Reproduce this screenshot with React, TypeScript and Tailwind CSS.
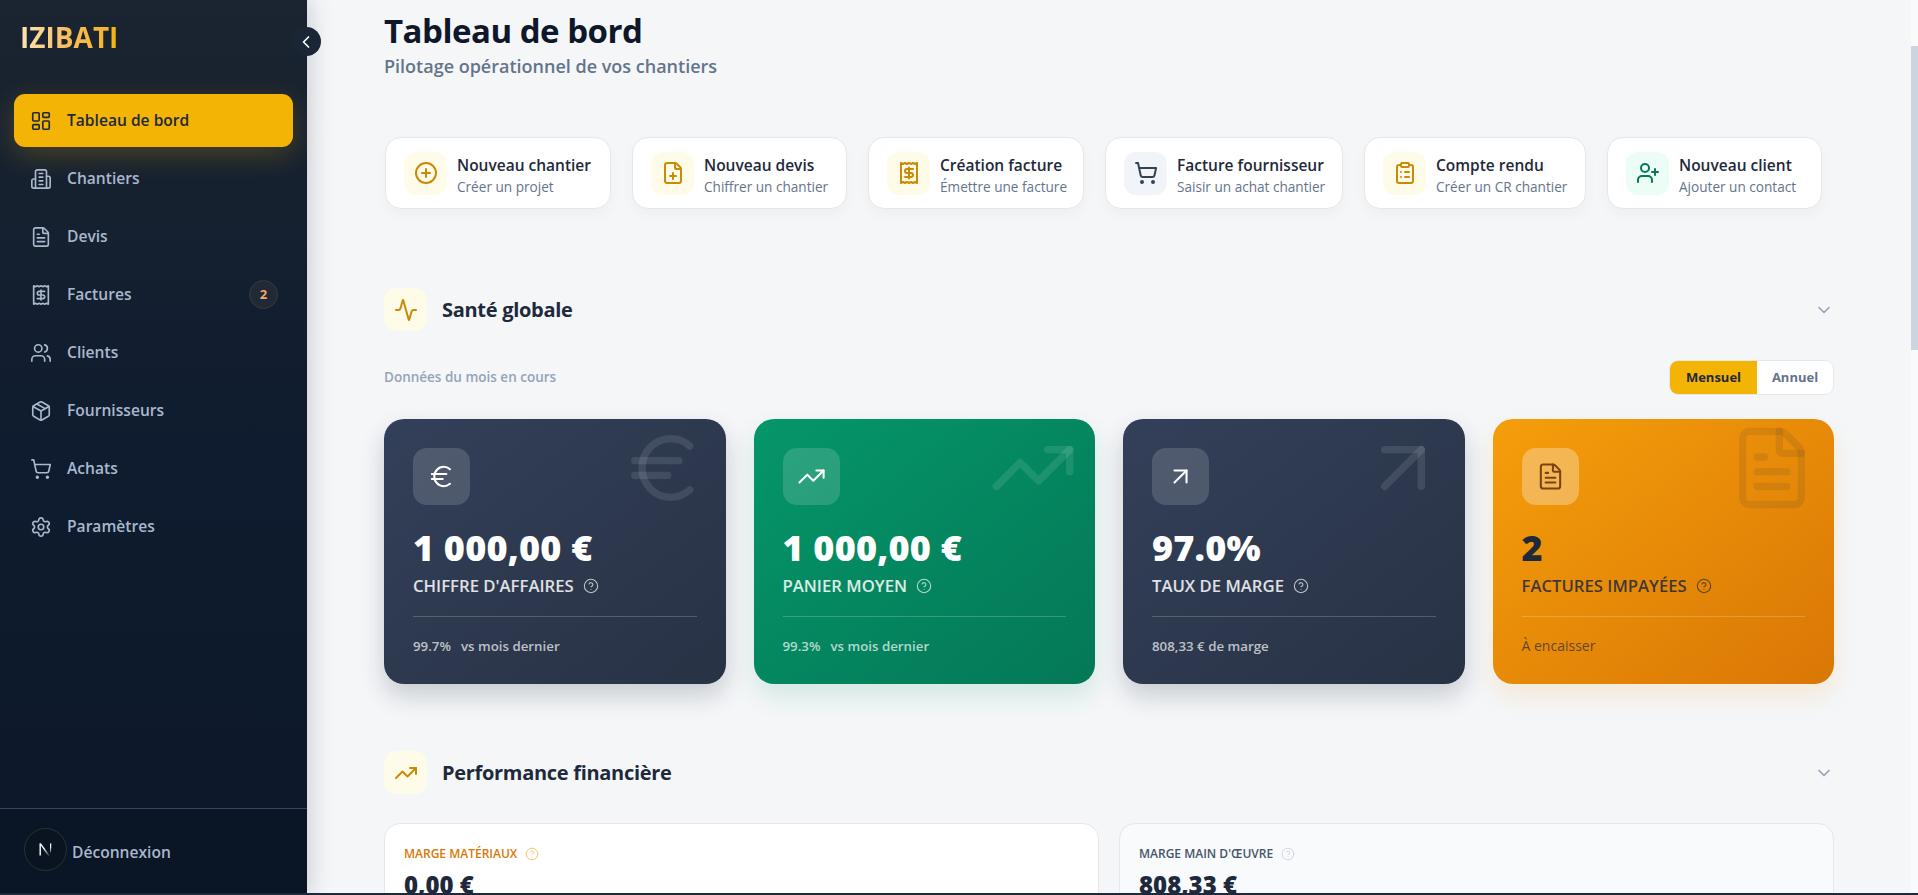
import React from "react";
import {
  Activity,
  ArrowUpRight,
  ChevronDown,
  ChevronLeft,
  CircleHelp,
  CirclePlus,
  ClipboardList,
  Euro,
  FilePlus,
  FileText,
  LayoutDashboard,
  LucideIcon,
  Package,
  Settings,
  ShoppingCart,
  TrendingUp,
  UserPlus,
  Users,
} from "lucide-react";

// Old lucide shapes, the installed version draws these two differently
const BuildingIcon: React.FC<{ className?: string; strokeWidth?: number }> = ({ className, strokeWidth = 2 }) => (
  <svg viewBox="0 0 24 24" fill="none" stroke="currentColor" strokeWidth={strokeWidth} strokeLinecap="round" strokeLinejoin="round" className={className}>
    <path d="M6 22V4a2 2 0 0 1 2-2h8a2 2 0 0 1 2 2v18Z" />
    <path d="M6 12H4a2 2 0 0 0-2 2v6a2 2 0 0 0 2 2h2" />
    <path d="M18 9h2a2 2 0 0 1 2 2v9a2 2 0 0 1-2 2h-2" />
    <path d="M10 6h4" />
    <path d="M10 10h4" />
    <path d="M10 14h4" />
    <path d="M10 18h4" />
  </svg>
);

const ReceiptIcon: React.FC<{ className?: string; strokeWidth?: number }> = ({ className, strokeWidth = 2 }) => (
  <svg viewBox="0 0 24 24" fill="none" stroke="currentColor" strokeWidth={strokeWidth} strokeLinecap="round" strokeLinejoin="round" className={className}>
    <path d="M4 2v20l2-1 2 1 2-1 2 1 2-1 2 1 2-1 2 1V2l-2 1-2-1-2 1-2-1-2 1-2-1-2 1Z" />
    <path d="M16 8h-6a2 2 0 1 0 0 4h4a2 2 0 1 1 0 4H8" />
    <path d="M12 17.5v-11" />
  </svg>
);

const navItems: { label: string; icon: React.ElementType; active?: boolean; badge?: string }[] = [
  { label: "Tableau de bord", icon: LayoutDashboard, active: true },
  { label: "Chantiers", icon: BuildingIcon },
  { label: "Devis", icon: FileText },
  { label: "Factures", icon: ReceiptIcon, badge: "2" },
  { label: "Clients", icon: Users },
  { label: "Fournisseurs", icon: Package },
  { label: "Achats", icon: ShoppingCart },
  { label: "Paramètres", icon: Settings },
];

const quickActions: { title: string; sub: string; icon: React.ElementType; width: string; box: string; tint: string }[] = [
  { title: "Nouveau chantier", sub: "Créer un projet", icon: CirclePlus, width: "w-[226px]", box: "bg-[#fefce8]", tint: "text-[#ca8a04]" },
  { title: "Nouveau devis", sub: "Chiffrer un chantier", icon: FilePlus, width: "w-[215px]", box: "bg-[#fefce8]", tint: "text-[#ca8a04]" },
  { title: "Création facture", sub: "Émettre une facture", icon: ReceiptIcon, width: "w-[216px]", box: "bg-[#fefce8]", tint: "text-[#ca8a04]" },
  { title: "Facture fournisseur", sub: "Saisir un achat chantier", icon: ShoppingCart, width: "w-[238px]", box: "bg-[#f1f5f9]", tint: "text-[#334155]" },
  { title: "Compte rendu", sub: "Créer un CR chantier", icon: ClipboardList, width: "w-[222px]", box: "bg-[#fefce8]", tint: "text-[#ca8a04]" },
  { title: "Nouveau client", sub: "Ajouter un contact", icon: UserPlus, width: "w-[215px]", box: "bg-[#ecfdf5]", tint: "text-[#047857]" },
];

interface KpiCardProps {
  value: string;
  label: string;
  icon: LucideIcon;
  footer: React.ReactNode;
  card: string;
  main: string;
  soft: string;
  faint: string;
  box: string;
  boxIcon: string;
  rule: string;
  mark: string;
}

const KpiCard: React.FC<KpiCardProps> = ({ value, label, icon: Icon, footer, card, main, soft, faint, box, boxIcon, rule, mark }) => (
  <div className={`relative h-[265px] rounded-[20px] p-[29px] ${card}`}>
    <Icon className={`absolute top-[5px] right-[18px] w-[88px] h-[88px] ${mark}`} strokeWidth={2} />
    <div className={`w-[57px] h-[57px] rounded-[14px] flex items-center justify-center ${box}`}>
      <Icon className={`w-[29px] h-[29px] ${boxIcon}`} strokeWidth={1.7} />
    </div>
    <div className={`mt-[21px] h-[44px] leading-[44px] text-[36px] font-black font-['Noto_Sans',sans-serif] tracking-[0.2px] ${main}`}>{value}</div>
    <div className={`mt-[4px] flex items-center gap-[9px] text-[16.7px] leading-[24px] font-semibold ${soft}`}>
      {label}
      <CircleHelp className={`w-[16px] h-[16px] ${faint}`} strokeWidth={1.6} />
    </div>
    <div className={`mt-[18px] h-px ${rule}`} />
    <div className={`mt-[20px] text-[13.3px] leading-[18px] font-semibold ${faint}`}>{footer}</div>
  </div>
);

const SectionHeader: React.FC<{ title: string; icon: LucideIcon }> = ({ title, icon: Icon }) => (
  <div className="flex items-center justify-between">
    <div className="flex items-center gap-[15px]">
      <div className="w-[43px] h-[43px] rounded-xl bg-[#fefce8] flex items-center justify-center">
        <Icon className="w-6 h-6 text-[#ca8a04]" strokeWidth={2} />
      </div>
      <h2 className="text-[20px] leading-7 font-bold text-[#1e293b] tracking-[-0.3px]">{title}</h2>
    </div>
    <ChevronDown className="w-[20px] h-[20px] text-[#94a3b8]" />
  </div>
);

const App: React.FC = () => {
  return (
    <div className="relative flex h-[895px] w-full overflow-hidden bg-[#f4f6f8] font-['Open_Sans',sans-serif]">
      {/* Sidebar */}
      <aside className="relative z-10 w-[307px] shrink-0 flex flex-col bg-gradient-to-b from-[#1b2430] via-[#0f1c2f] to-[#0c1829] shadow-[0_0_24px_rgba(15,23,42,0.22)]">
        <div className="h-[94px] pl-[20px] pt-[17px]">
          <span className="text-[28px] leading-[40px] font-bold bg-gradient-to-r from-[#fde3b4] via-[#f8bc55] to-[#f4b405] bg-clip-text text-transparent">
            IZIBATI
          </span>
        </div>
        <button className="absolute top-[27px] -right-[14px] w-[29px] h-[29px] rounded-full bg-[#1a2636] flex items-center justify-center text-white">
          <ChevronLeft className="w-5 h-5 -ml-[2px]" />
        </button>

        <nav className="flex flex-col gap-[5.1px] px-[14px]">
          {navItems.map((item) => {
            const Icon = item.icon;
            return (
              <div
                key={item.label}
                className={`h-[53px] rounded-[11px] pl-[16px] pr-[15px] flex items-center gap-[15px] text-[15.6px] font-semibold ${
                  item.active
                    ? "bg-[#f4b405] text-[#1e293b] shadow-[0_8px_28px_rgba(244,180,5,0.22)]"
                    : "text-[#a9b8cd]"
                }`}
              >
                <Icon className="w-[22px] h-[22px]" strokeWidth={1.8} />
                <span className="flex-1">{item.label}</span>
                {item.badge && (
                  <span className="w-[29px] h-[29px] rounded-full bg-[#1f2a36] border border-[#3b3a34] flex items-center justify-center text-[13px] font-bold text-[#f3a863]">
                    {item.badge}
                  </span>
                )}
              </div>
            );
          })}
        </nav>

        <div className="mt-auto h-[87px] border-t border-[#34445a] bg-[#0a1526] pl-[24px] pt-[19px] flex items-start gap-[5px]">
          <div className="w-[43px] h-[43px] rounded-full bg-[#0a1320] border border-[#2c3235] flex items-center justify-center">
            <svg viewBox="0 0 18 18" className="w-[18px] h-[18px]" fill="none">
              <defs>
                <linearGradient id="nextFade" x1="0.6" y1="0.3" x2="0.9" y2="1">
                  <stop offset="0" stopColor="#fff" />
                  <stop offset="1" stopColor="#fff" stopOpacity="0" />
                </linearGradient>
              </defs>
              <path d="M2.5 2.5h1.6l9.4 13h-2z" fill="url(#nextFade)" />
              <path d="M2.5 2.5h1.4v12H2.5z" fill="#fff" />
              <path d="M13 2.5h1.3v9H13z" fill="url(#nextFade)" />
            </svg>
          </div>
          <span className="mt-[12px] text-[15.6px] leading-[24px] font-semibold text-[#a9b8cd]">Déconnexion</span>
        </div>
      </aside>

      {/* Main */}
      <main className="flex-1 min-w-0 overflow-hidden pt-[9px]">
        <div className="w-[1450px] mx-auto">
          <header>
            <h1 className="text-[33px] leading-[44px] font-bold text-[#0f172a] tracking-[-0.5px]">Tableau de bord</h1>
            <p className="text-[18px] leading-[27px] font-semibold text-[#64748b]">Pilotage opérationnel de vos chantiers</p>
          </header>

          <div className="mt-[57px] flex gap-[21px] pl-px">
            {quickActions.map((action) => {
              const Icon = action.icon;
              return (
                <div
                  key={action.title}
                  className={`${action.width} shrink-0 h-[72px] rounded-2xl bg-white border border-[#e5e7eb] shadow-[0_6px_14px_rgba(15,23,42,0.03)] pl-[18px] flex items-center gap-[10px]`}
                >
                  <div className={`w-[43px] h-[43px] shrink-0 rounded-xl flex items-center justify-center ${action.box}`}>
                    <Icon className={`w-6 h-6 ${action.tint}`} strokeWidth={2} />
                  </div>
                  <div className="whitespace-nowrap mt-[3px]">
                    <div className="text-[15.5px] leading-[23px] font-semibold text-[#1e293b]">{action.title}</div>
                    <div className="text-[13.6px] leading-[19px] text-[#64748b]">{action.sub}</div>
                  </div>
                </div>
              );
            })}
          </div>

          <section className="mt-[79px]">
            <SectionHeader title="Santé globale" icon={Activity} />
            <div className="mt-[30px] flex items-center justify-between">
              <span className="text-[13.5px] font-semibold text-[#94a3b8]">Données du mois en cours</span>
              <div className="flex h-[33px] mr-px rounded-lg bg-white shadow-[0_0_0_1px_#e5e7eb] overflow-hidden text-[13px] font-bold">
                <span className="w-[87px] bg-[#f4b405] text-[#1e293b] flex items-center justify-center">Mensuel</span>
                <span className="w-[76px] text-[#64748b] flex items-center justify-center">Annuel</span>
              </div>
            </div>
            <div className="mt-[25px] grid grid-cols-4 gap-7">
              <KpiCard
                value="1 000,00 €"
                label="CHIFFRE D'AFFAIRES"
                icon={Euro}
                card="bg-gradient-to-br from-[#334059] to-[#283245] shadow-[0_12px_24px_rgba(30,41,59,0.2)]"
                main="text-white"
                soft="text-white/85"
                faint="text-white/70"
                box="bg-white/15"
                boxIcon="text-white"
                rule="bg-white/20"
                mark="text-white/10"
                footer={<span className="flex gap-[10px]"><span>99.7%</span><span>vs mois dernier</span></span>}
              />
              <KpiCard
                value="1 000,00 €"
                label="PANIER MOYEN"
                icon={TrendingUp}
                card="bg-gradient-to-br from-[#059669] to-[#047857] shadow-[0_12px_24px_rgba(5,150,105,0.14)]"
                main="text-white"
                soft="text-white/85"
                faint="text-white/70"
                box="bg-white/15"
                boxIcon="text-white"
                rule="bg-white/20"
                mark="text-white/10"
                footer={<span className="flex gap-[10px]"><span>99.3%</span><span>vs mois dernier</span></span>}
              />
              <KpiCard
                value="97.0%"
                label="TAUX DE MARGE"
                icon={ArrowUpRight}
                card="bg-gradient-to-br from-[#334059] to-[#283245] shadow-[0_12px_24px_rgba(30,41,59,0.2)]"
                main="text-white"
                soft="text-white/85"
                faint="text-white/70"
                box="bg-white/15"
                boxIcon="text-white"
                rule="bg-white/20"
                mark="text-white/10"
                footer="808,33 € de marge"
              />
              <KpiCard
                value="2"
                label="FACTURES IMPAYÉES"
                icon={FileText}
                card="bg-gradient-to-br from-[#f59e0b] to-[#d97706] shadow-[0_12px_24px_rgba(245,158,11,0.14)]"
                main="text-[#1e293b]"
                soft="text-[#1e293b]/85"
                faint="text-[#1e293b]/70"
                box="bg-white/30"
                boxIcon="text-[#7a4314]"
                rule="bg-white/20"
                mark="text-[#1e293b]/10"
                footer={<span className="text-[14px] font-medium">À encaisser</span>}
              />
            </div>
          </section>

          <section className="mt-[67px]">
            <SectionHeader title="Performance financière" icon={TrendingUp} />
            <div className="mt-[29px] grid grid-cols-2 gap-5">
              <div className="h-[120px] rounded-2xl bg-white border border-[#e5e7eb] px-[19px] pt-[20px]">
                <div className="flex items-center gap-[8px] text-[12px] leading-[20px] font-semibold text-[#d97706]">
                  MARGE MATÉRIAUX
                  <CircleHelp className="w-[14px] h-[14px] text-[#f6c26b]" strokeWidth={1.6} />
                </div>
                <div className="mt-[5px] text-[24px] leading-[32px] font-extrabold text-[#1e293b]">0,00 €</div>
              </div>
              <div className="h-[120px] rounded-2xl bg-[#f8fafc] border border-[#e5e7eb] px-[19px] pt-[20px]">
                <div className="flex items-center gap-[8px] text-[12px] leading-[20px] font-semibold text-[#475569]">
                  MARGE MAIN D'ŒUVRE
                  <CircleHelp className="w-[14px] h-[14px] text-[#cbd5e1]" strokeWidth={1.6} />
                </div>
                <div className="mt-[5px] text-[24px] leading-[32px] font-extrabold text-[#1e293b]">808,33 €</div>
              </div>
            </div>
          </section>
        </div>
      </main>

      {/* Scrollbar */}
      <div className="w-[7px] shrink-0 bg-[#f8fafc] pt-[46px]">
        <div className="h-[304px] bg-[#cbd5e1]" />
      </div>

      {/* Edge of the capture */}
      <div className="absolute z-20 bottom-0 left-0 right-0 h-[2px] bg-[#1e293b]" />
    </div>
  );
};

export default App;
